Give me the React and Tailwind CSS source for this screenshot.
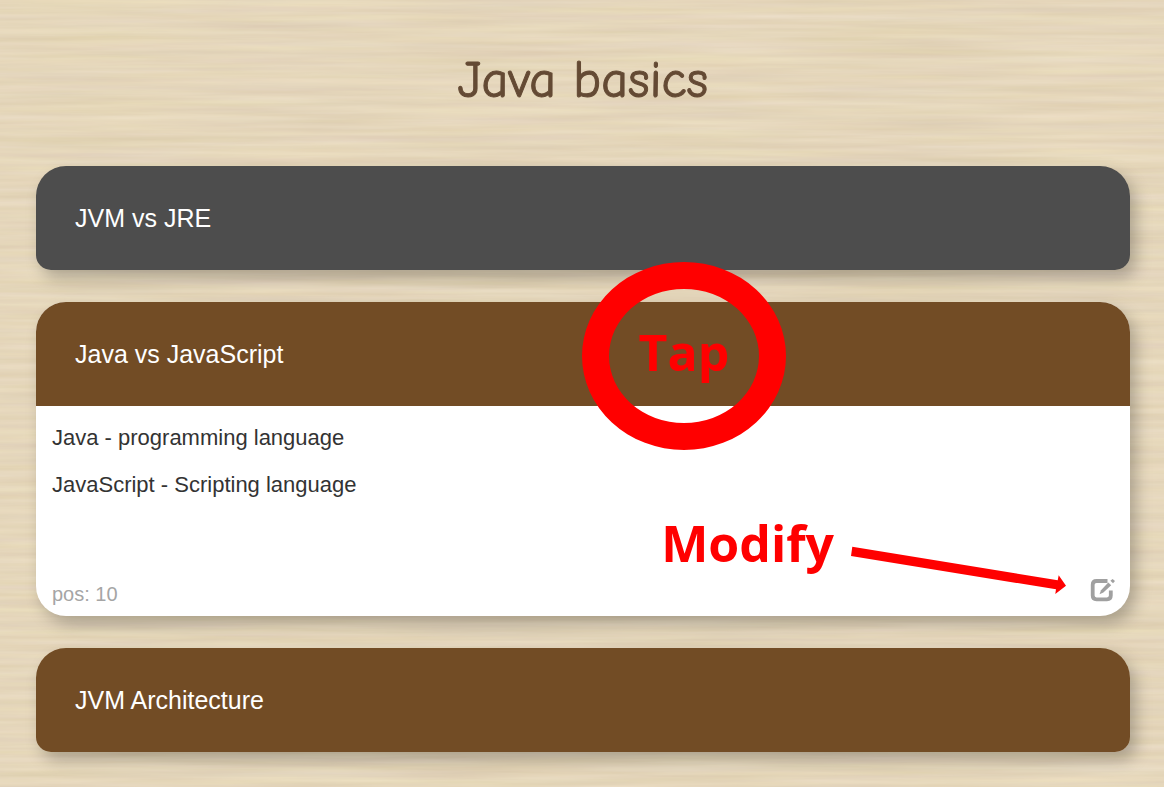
import { useState } from "react";

function WoodTexture() {
  return (
    <svg className="absolute inset-0 -z-10 h-full w-full" aria-hidden="true">
      <filter id="grain" x="0" y="0" width="100%" height="100%" colorInterpolationFilters="sRGB">
        <feTurbulence type="fractalNoise" baseFrequency="0.005 0.14" numOctaves="4" seed="8" />
        <feColorMatrix
          type="matrix"
          values="0.07 0 0 0 0.862
                  0.08 0.02 0 0 0.790
                  0.08 0 0.06 0 0.662
                  0 0 0 0 1"
        />
      </filter>
      <rect width="100%" height="100%" filter="url(#grain)" />
    </svg>
  );
}

function EditIcon() {
  return (
    <svg width="26" height="24" viewBox="0 0 26 24" fill="none" stroke="#a0a0a0" aria-hidden="true">
      <path d="M17.5 3H6.5Q2.7 3 2.7 6.8V17.6Q2.7 21.3 6.5 21.3H17Q20.8 21.3 20.8 17.6V12.5" strokeWidth="3.8" />
      <path d="M9.5 16.2L11 12.2L18.3 4.5L21.2 7.3L13.4 14.6Z" fill="#a0a0a0" stroke="none" />
      <path d="M20.4 2.8L22.6 0.9L25 3.1L23 5.3Z" fill="#a0a0a0" stroke="none" />
    </svg>
  );
}

function Card({ title, tone = "bg-[#724c25]", open = false, onToggle, children }) {
  return (
    <section
      className={`relative rounded-t-[30px] shadow-[6px_8px_16px_rgba(0,0,0,0.25)] ${
        open ? "rounded-b-[30px] bg-white" : "rounded-b-[15px]"
      }`}
    >
      <h2>
        <button
          type="button"
          aria-expanded={open}
          onClick={onToggle}
          className={`block w-full rounded-t-[30px] px-[39px] py-8 text-left text-[25px] leading-10 text-white ${tone} ${
            open ? "" : "rounded-b-[15px]"
          }`}
        >
          {title}
        </button>
      </h2>
      {open && children}
    </section>
  );
}

export default function App() {
  const [open, setOpen] = useState(true);
  return (
    <main className="relative isolate min-h-screen overflow-hidden bg-[#e4d5b9] pt-12 pr-[34px] pb-8 pl-9 font-['Liberation_Sans',Arial,sans-serif]">
      <WoodTexture />
      <h1 className="mb-[54px] text-center font-['Comic_Sans_MS','Comic_Neue','Open_Sans',sans-serif] text-[52px] leading-16 text-[#644a34] [-webkit-text-stroke:1px_#644a34]">
        Java basics
      </h1>
      <div className="flex flex-col gap-8">
        <Card title="JVM vs JRE" tone="bg-[#4d4d4d]" />
        <Card title="Java vs JavaScript" open={open} onToggle={() => setOpen(!open)}>
          <div className="flex min-h-[210px] flex-col justify-between pt-4 pr-[14px] pb-2 pl-4">
            <div className="flex flex-col gap-[15px] text-[22px] leading-8 text-[#333]">
              <p>Java - programming language</p>
              <p>JavaScript - Scripting language</p>
            </div>
            <div className="flex items-start justify-between text-xl leading-7 text-[#a5a5a5]">
              <span>pos: 10</span>
              <button type="button" aria-label="Edit" className="-mt-0.5">
                <EditIcon />
              </button>
            </div>
          </div>
          <div className="pointer-events-none absolute -top-10 left-1/2 flex h-[188px] w-[204px] -translate-x-px items-center justify-center rounded-[50%] border-[27px] border-[#f00] pb-2 font-['Open_Sans',sans-serif] text-[50px] leading-none font-bold text-[#f00]">
            Tap
          </div>
          <div className="pointer-events-none absolute right-16 bottom-4 flex items-end gap-4 font-['Open_Sans',sans-serif] text-[50px] leading-none font-bold text-[#f00]">
            <span className="pb-8">Modify</span>
            <svg width="216" height="60" viewBox="0 0 216 60" fill="#f00" aria-hidden="true">
              <path d="M2.3 6.7L207.7 40.3L208.7 35.3L216 45.7L205.3 54L206 49.3L1 16Z" />
            </svg>
          </div>
        </Card>
        <Card title="JVM Architecture" />
      </div>
    </main>
  );
}
